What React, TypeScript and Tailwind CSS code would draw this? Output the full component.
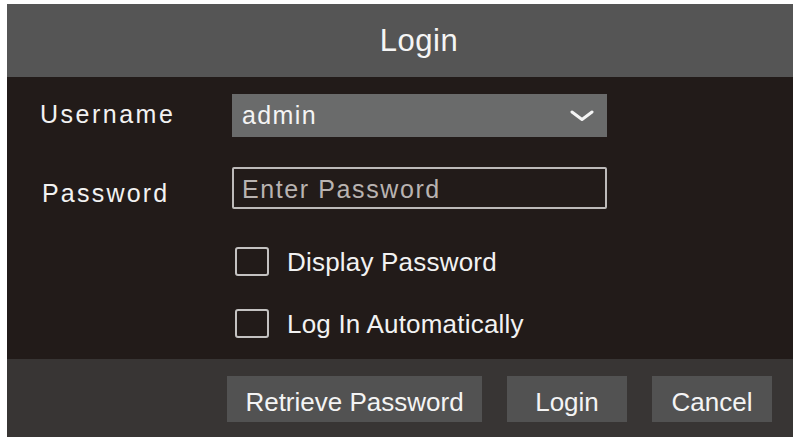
import { useState } from "react";

const FONT = { fontFamily: '"Liberation Sans", Arial, sans-serif' };

function Checkbox({ label, checked, onChange }: { label: string; checked: boolean; onChange: () => void }) {
  return (
    <button onClick={onChange} className="flex items-center gap-[18px] text-left">
      <span className="w-[34px] h-[29px] rounded-[3px] border-2 border-[#c4c2c1] flex items-center justify-center">
        {checked && <span className="w-[16px] h-[12px] bg-[#d8d8d8]" />}
      </span>
      <span className="text-[26px] leading-none text-[#f2f2f2] tracking-[0.2px]">{label}</span>
    </button>
  );
}

export default function App() {
  const [showPw, setShowPw] = useState(false);
  const [auto, setAuto] = useState(false);

  return (
    <div className="w-[798px] h-[445px] bg-white pt-[4px] pl-[7px]" style={FONT}>
      <div className="w-[786px] h-[433px] flex flex-col">
        {/* Header */}
        <div className="h-[73px] bg-[#555555] flex items-center justify-center pl-[38px]">
          <span className="text-[31px] leading-none text-[#f5f5f5] tracking-[0.5px]">Login</span>
        </div>

        {/* Body */}
        <div className="flex-1 bg-[#221b19] pl-[33px] pt-[17px]">
          <div className="flex items-center">
            <div className="w-[192px] text-[25px] leading-none tracking-[2.5px] text-[#f2f2f2] -mt-[2px]">Username</div>
            <div className="w-[375px] h-[43px] bg-[#6a6b6b] flex items-center justify-between pl-[10px] pr-[13px]">
              <span className="text-[25px] leading-none tracking-[1.4px] text-[#f4f4f4]">admin</span>
              <svg width="24" height="12" viewBox="0 0 24 12" fill="none">
                <path d="M2 2 L12 9.5 L22 2" stroke="#f4f4f4" strokeWidth="3" strokeLinecap="round" strokeLinejoin="round" />
              </svg>
            </div>
          </div>

          <div className="flex items-center mt-[30px]">
            <div className="w-[192px] pl-[2px] text-[25px] leading-none tracking-[2.2px] text-[#f2f2f2] mt-[10px]">Password</div>
            <div className="w-[375px] h-[42px] border-2 border-[#bdbab9] rounded-[2px] flex items-center pl-[8px] pt-[2px]">
              <span className="text-[25px] leading-none tracking-[1.6px] text-[#b9b3b1]">Enter Password</span>
            </div>
          </div>

          <div className="ml-[195px] mt-[38px] flex flex-col gap-[33px]">
            <Checkbox label="Display Password" checked={showPw} onChange={() => setShowPw(!showPw)} />
            <Checkbox label="Log In Automatically" checked={auto} onChange={() => setAuto(!auto)} />
          </div>
        </div>

        {/* Footer */}
        <div className="h-[78px] bg-[#383534] flex justify-end items-start pt-[17px] pr-[21px] gap-[25px]">
          <button className="w-[255px] h-[46px] pt-[5px] bg-[#525252] text-[26px] leading-none text-[#f4f4f4]">Retrieve Password</button>
          <button className="w-[120px] h-[46px] pt-[5px] bg-[#525252] text-[26px] leading-none text-[#f4f4f4]">Login</button>
          <button className="w-[120px] h-[46px] pt-[5px] bg-[#525252] text-[26px] leading-none text-[#f4f4f4]">Cancel</button>
        </div>
      </div>
    </div>
  );
}
